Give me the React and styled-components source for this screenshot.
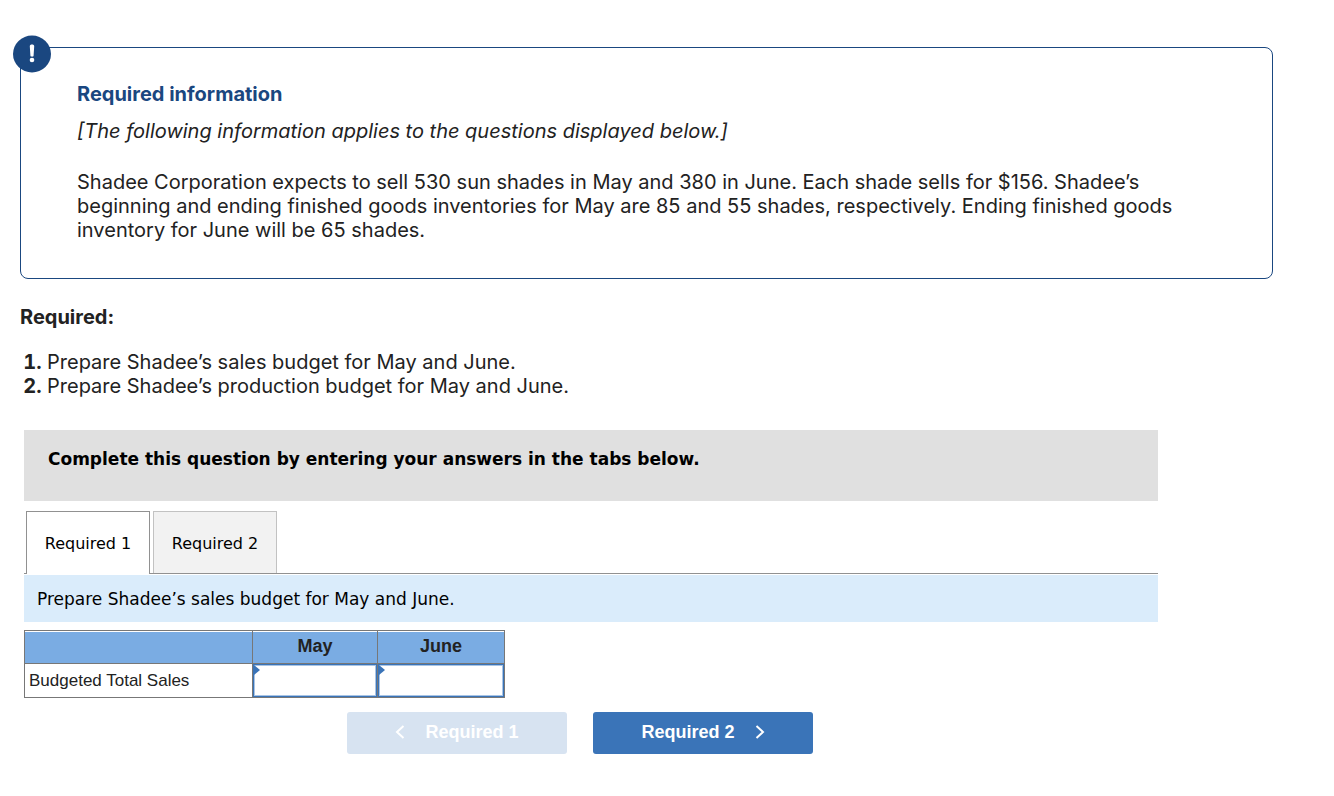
import { useState } from "react";
import styled, { createGlobalStyle } from "styled-components";

const steps = [
  {
    label: "Required 1",
    task: "Prepare Shadee’s sales budget for May and June.",
    row: "Budgeted Total Sales",
  },
  {
    label: "Required 2",
    task: "Prepare Shadee’s production budget for May and June.",
    row: "Budgeted Production",
  },
];

const months = ["May", "June"];

const Chevron = ({ left }) => (
  <ChevronIcon viewBox="0 0 10 16" aria-hidden="true">
    <path d={left ? "M8.500 2 2 8 8.500 14" : "M1.500 2 8 8 1.500 14"} />
  </ChevronIcon>
);

const App = () => {
  const [active, setActive] = useState(0);
  const [answers, setAnswers] = useState({});

  const handleChange = ({ target }) => {
    setAnswers({ ...answers, [target.name]: target.value });
  };

  return (
    <>
      <GlobalStyle />
      <Page>
        <Notice>
          <Badge viewBox="0 0 38 38" aria-hidden="true">
            <ellipse cx="19" cy="19" rx="19" ry="18.500" />
            <path d="M16.800 11.200c0-1.200.8-1.800 2.200-1.800s2.200.6 2.200 1.800l-.6 9.300c0 .8-.6 1.200-1.600 1.200s-1.600-.4-1.600-1.200z" />
            <circle className="dot" cx="19" cy="25" r="2.300" />
          </Badge>
          <NoticeTitle>Required information</NoticeTitle>
          <NoticeHint>[The following information applies to the questions displayed below.]</NoticeHint>
          <NoticeText>
            Shadee Corporation expects to sell 530 sun shades in May and 380 in June. Each shade sells for $156. Shadee’s
            beginning and ending finished goods inventories for May are 85 and 55 shades, respectively. Ending finished goods
            inventory for June will be 65 shades.
          </NoticeText>
        </Notice>

        <Heading>Required:</Heading>
        <TaskList>
          {steps.map(({ label, task }) => (
            <li key={label}>{task}</li>
          ))}
        </TaskList>

        <Worksheet>
          <Banner>Complete this question by entering your answers in the tabs below.</Banner>
          <Tabs role="tablist">
            {steps.map(({ label }, index) => (
              <Tab
                key={label}
                type="button"
                role="tab"
                aria-selected={index === active}
                $active={index === active}
                onClick={() => setActive(index)}
              >
                {label}
              </Tab>
            ))}
          </Tabs>
          <Prompt>{steps[active].task}</Prompt>

          <Table>
            <thead>
              <tr>
                <HeadCell $width={228} aria-label="Item" />
                <HeadCell $width={125} scope="col">May</HeadCell>
                <HeadCell $width={127} scope="col">June</HeadCell>
              </tr>
            </thead>
            <tbody>
              <tr>
                <RowLabel scope="row">{steps[active].row}</RowLabel>
                {months.map((month) => {
                  const name = `${active}-${month}`;
                  return (
                    <AnswerCell key={name}>
                      <Answer
                        type="text"
                        name={name}
                        aria-label={`${steps[active].row}, ${month}`}
                        value={answers[name] || ""}
                        onChange={handleChange}
                      />
                    </AnswerCell>
                  );
                })}
              </tr>
            </tbody>
          </Table>

          <Nav>
            <NavButton type="button" disabled={active === 0} onClick={() => setActive(0)}>
              <Chevron left />
              Required 1
            </NavButton>
            <NavButton type="button" disabled={active === 1} onClick={() => setActive(1)}>
              Required 2
              <Chevron />
            </NavButton>
          </Nav>
        </Worksheet>
      </Page>
    </>
  );
};

export default App;

const GlobalStyle = createGlobalStyle`
  * {
    box-sizing: border-box;
  }
  body {
    margin: 0;
    background: #fff;
    color: #222;
    font-family: Inter, Roboto, sans-serif;
    font-size: 20px;
    line-height: 24px;
  }
`

const Page = styled.main`
  padding: 47px 61px 42px 20px;
`

const Notice = styled.section`
  position: relative;
  padding: 34px 80px 36px 56px;
  border: 1px solid #1a4780;
  border-radius: 8px;
`

/* sits over the corner of the notice border */
const Badge = styled.svg`
  position: absolute;
  top: -13px;
  left: -8px;
  width: 38px;
  height: 38px;
  fill: #1a4780;

  path,
  .dot {
    fill: #fff;
  }
`

const NoticeTitle = styled.h2`
  margin: 0 0 13px;
  color: #1a4780;
  font-size: 20px;
  line-height: 24px;
`

const NoticeHint = styled.p`
  margin: 0 0 27px;
  font-style: italic;
`

const NoticeText = styled.p`
  margin: 0;
`

const Heading = styled.h3`
  margin: 26px 0 21px;
  font-size: 20px;
  line-height: 24px;
`

const TaskList = styled.ol`
  margin: 0;
  padding-left: 27px;

  li::marker {
    font-weight: bold;
  }
`

const Worksheet = styled.section`
  margin: 32px 115px 0 4px;
  color: #000;
  font-family: "DejaVu Sans", Verdana, sans-serif;
`

const Banner = styled.div`
  padding: 17px 24px 30px;
  background: #e0e0e0;
  font-size: 17px;
  font-weight: bold;
`

const Tabs = styled.div`
  display: flex;
  gap: 3px;
  margin-top: 10px;
  padding-left: 2px;
  border-bottom: 1px solid #919191;
`

const Tab = styled.button`
  width: 124px;
  height: ${({ $active }) => ($active ? 63 : 62)}px;
  margin-bottom: ${({ $active }) => ($active ? -1 : 0)}px;
  padding: ${({ $active }) => ($active ? "1px 0 0" : "2px 0 0")};
  border: 1px solid ${({ $active }) => ($active ? "#919191" : "#c2c2c2")};
  border-bottom: none;
  background: ${({ $active }) => ($active ? "#fff" : "#f2f2f2")};
  color: #000;
  font-family: inherit;
  font-size: 16px;
  cursor: pointer;
`

const Prompt = styled.div`
  margin-top: 1px;
  padding: 12px 13px 11px;
  background: #daecfb;
  font-size: 17px;
`

const Table = styled.table`
  margin-top: 8px;
  border-collapse: collapse;
  table-layout: fixed;
  width: 481px;
  color: #222;
  font-family: "Liberation Sans", Arial, sans-serif;
  font-size: 18px;
`

const HeadCell = styled.th`
  width: ${({ $width }) => $width}px;
  height: 33px;
  padding: 0 0 2px;
  border: 1px solid #777;
  background: #7aace3;
  box-shadow: inset 0 1px #fff;
`

const RowLabel = styled.th`
  height: 34px;
  padding: 0 4px;
  border: 1px solid #777;
  font-size: 17px;
  font-weight: normal;
  text-align: left;
`

const AnswerCell = styled.td`
  position: relative;
  padding: 0;
  border: 1px solid #777;

  /* entry flag in the corner of the field */
  &::before {
    content: "";
    position: absolute;
    top: 1px;
    left: 1px;
    border: solid transparent;
    border-width: 5px 0 5px 6px;
    border-left-color: #3a74b8;
  }
`

const Answer = styled.input`
  display: block;
  width: 100%;
  height: 33px;
  padding: 0 8px;
  border: 1px solid #3a74b8;
  border-radius: 0;
  outline: none;
  box-shadow: inset 0 0 0 1px #a9c4e4;
  font: inherit;
  text-align: right;
`

const Nav = styled.nav`
  display: flex;
  justify-content: center;
  gap: 26px;
  margin-top: 14px;
  padding-right: 22px;
`

const NavButton = styled.button`
  display: flex;
  align-items: center;
  justify-content: center;
  gap: 20px;
  width: 220px;
  height: 42px;
  padding: 0 0 2px;
  border: none;
  border-radius: 3px;
  background: #3a74b8;
  color: #fff;
  font-family: "Liberation Sans", Arial, sans-serif;
  font-size: 18px;
  font-weight: bold;
  cursor: pointer;

  &:disabled {
    background: #d7e3f1;
    cursor: default;
  }
`

const ChevronIcon = styled.svg`
  width: 10px;
  height: 16px;
  fill: none;
  stroke: currentColor;
  stroke-width: 2;
`
